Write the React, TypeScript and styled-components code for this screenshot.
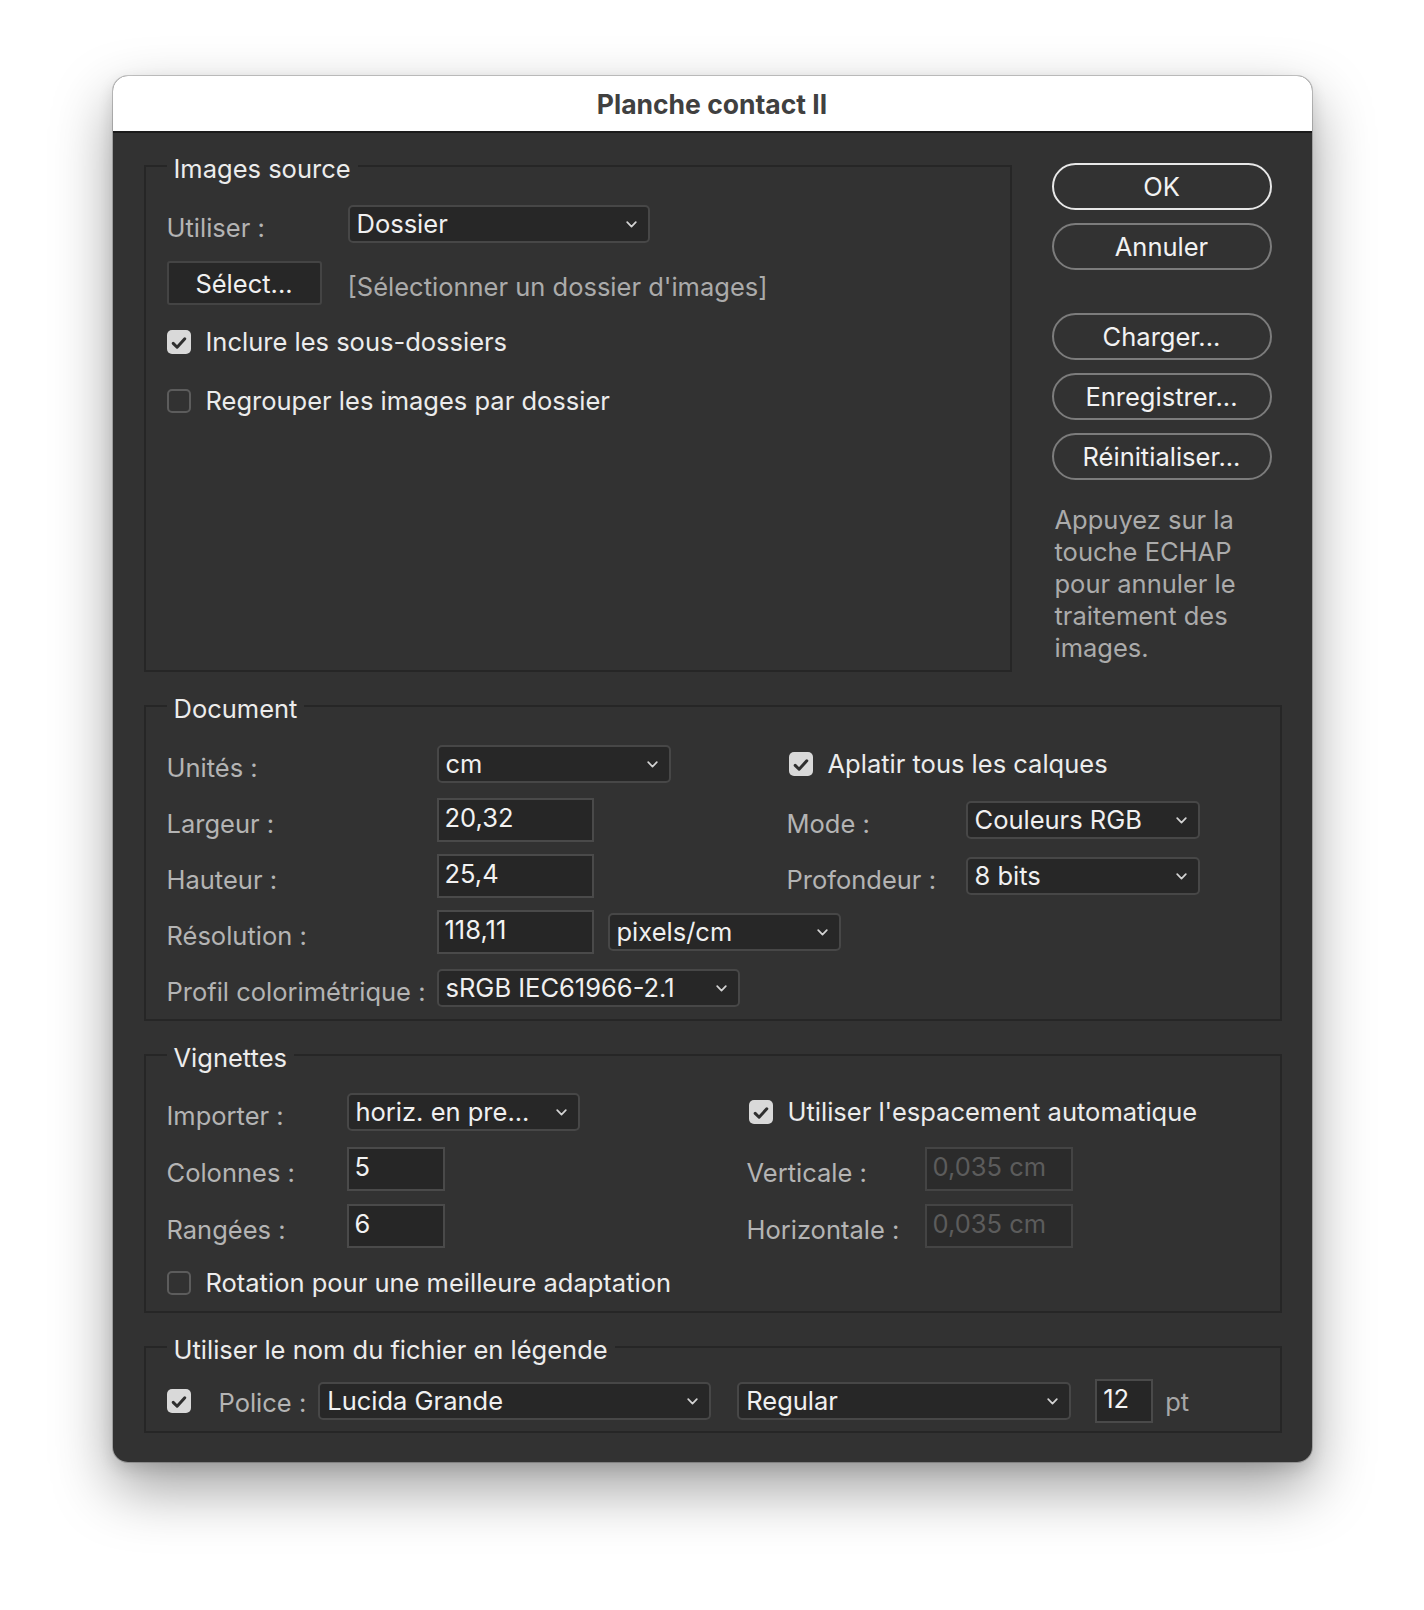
import React from "react";
import styled, { createGlobalStyle } from "styled-components";

const GlobalStyle = createGlobalStyle`
  html, body { margin: 0; padding: 0; background: #ffffff; }
  body {
    font-family: Inter, "Noto Sans", "Liberation Sans", sans-serif;
    -webkit-font-smoothing: antialiased;
  }
  * { box-sizing: border-box; }
`;

function Chevron() {
  return (
    <svg width="11" height="7" viewBox="0 0 11 7" fill="none">
      <path d="M1.2 1.2 L5.5 5.6 L9.8 1.2" stroke="#d4d4d4" strokeWidth="1.7" strokeLinecap="round" strokeLinejoin="round" />
    </svg>
  );
}

function Check({ checked, children }: { checked?: boolean; children?: React.ReactNode }) {
  return (
    <CheckRow>
      <Box $checked={checked}>
        {checked && (
          <svg width="24" height="24" viewBox="0 0 24 24" fill="none">
            <path d="M6.2 12.4 L10.1 16.2 L17.8 7.8" stroke="#2f2f2f" strokeWidth="3" strokeLinecap="round" strokeLinejoin="round" />
          </svg>
        )}
      </Box>
      {children && <CheckText>{children}</CheckText>}
    </CheckRow>
  );
}

function Select({ w, value }: { w: number; value: string }) {
  return (
    <SelectBox $w={w}>
      <span>{value}</span>
      <Chevron />
    </SelectBox>
  );
}

export default function App() {
  return (
    <>
      <GlobalStyle />
      <Page>
        <Dialog>
          <TitleBar>Planche contact II</TitleBar>
          <Body>
            <TopRow>
              <Group $w={868}>
                <Legend>Images source</Legend>
                <SourceContent>
                  <Row>
                    <Label $w={181}>Utiliser :</Label>
                    <Select w={302} value="Dossier" />
                  </Row>
                  <Row>
                    <PlainButton>Sélect...</PlainButton>
                    <Hint>[Sélectionner un dossier d'images]</Hint>
                  </Row>
                  <Row>
                    <Check checked>Inclure les sous-dossiers</Check>
                  </Row>
                  <Row>
                    <Check>Regrouper les images par dossier</Check>
                  </Row>
                </SourceContent>
              </Group>

              <Actions>
                <Pill $primary>OK</Pill>
                <Pill>Annuler</Pill>
                <Pill $spaced>Charger...</Pill>
                <Pill>Enregistrer...</Pill>
                <Pill>Réinitialiser...</Pill>
                <HelpText>
                  Appuyez sur la<br />
                  touche ECHAP<br />
                  pour annuler le<br />
                  traitement des<br />
                  images.
                </HelpText>
              </Actions>
            </TopRow>

            <Group>
              <Legend>Document</Legend>
              <FormGrid $cols="270px 350px 179px 1fr" $top={20} $bottom={9} $gap={12}>
                <Label>Unités :</Label>
                <Select w={234} value="cm" />
                <Span2>
                  <Check checked>Aplatir tous les calques</Check>
                </Span2>

                <Label>Largeur :</Label>
                <Field $w={157}>20,32</Field>
                <Label>Mode :</Label>
                <Select w={234} value="Couleurs RGB" />

                <Label>Hauteur :</Label>
                <Field $w={157}>25,4</Field>
                <Label>Profondeur :</Label>
                <Select w={234} value="8 bits" />

                <Label>Résolution :</Label>
                <Inline>
                  <Field $w={157}>118,11</Field>
                  <Select w={233} value="pixels/cm" />
                </Inline>
                <span />
                <span />

                <Label>Profil colorimétrique :</Label>
                <Select w={303} value="sRGB IEC61966-2.1" />
              </FormGrid>
            </Group>

            <Group>
              <Legend>Vignettes</Legend>
              <FormGrid $cols="180px 400px 178px 1fr" $top={19} $bottom={6} $gap={13}>
                <Label>Importer :</Label>
                <Select w={233} value="horiz. en pre..." />
                <Span2>
                  <Check checked>Utiliser l'espacement automatique</Check>
                </Span2>

                <Label>Colonnes :</Label>
                <Field $w={98}>5</Field>
                <Label>Verticale :</Label>
                <Field $w={148} $disabled>0,035 cm</Field>

                <Label>Rangées :</Label>
                <Field $w={98}>6</Field>
                <Label>Horizontale :</Label>
                <Field $w={148} $disabled>0,035 cm</Field>

                <SpanAll>
                  <Check>Rotation pour une meilleure adaptation</Check>
                </SpanAll>
              </FormGrid>
            </Group>

            <Group>
              <Legend>Utiliser le nom du fichier en légende</Legend>
              <CaptionRow>
                <Check checked />
                <PoliceLabel>Police :</PoliceLabel>
                <Select w={393} value="Lucida Grande" />
                <Select w={334} value="Regular" />
                <Field $w={58}>12</Field>
                <Unit>pt</Unit>
              </CaptionRow>
            </Group>
          </Body>
        </Dialog>
      </Page>
    </>
  );
}

const Page = styled.div`
  width: 1424px;
  height: 1610px;
  padding-top: 76px;
  display: flex;
  justify-content: center;
  align-items: flex-start;
  background: #ffffff;
`;

const Dialog = styled.div`
  width: 1199px;
  border-radius: 15px;
  overflow: hidden;
  background: #323232;
  box-shadow: 0 0 0 1px rgba(0, 0, 0, 0.2), 0 26px 60px rgba(0, 0, 0, 0.38),
    0 6px 16px rgba(0, 0, 0, 0.12);
`;

const TitleBar = styled.div`
  height: 57px;
  background: #ffffff;
  border-bottom: 2px solid #1b1b1b;
  display: flex;
  align-items: center;
  justify-content: center;
  font-size: 26.5px;
  font-weight: 700;
  color: #404040;
`;

const Body = styled.div`
  padding: 17px 30px 29px 31px;
  display: flex;
  flex-direction: column;
  gap: 18px;
  color: #ececec;
  font-size: 25.5px;
`;

const TopRow = styled.div`
  display: flex;
  align-items: flex-start;
`;

const Group = styled.fieldset<{ $w?: number }>`
  margin: 0;
  padding: 0 20px 0 21px;
  min-width: 0;
  width: ${(p) => (p.$w ? `${p.$w}px` : "100%")};
  border: 2px solid #262626;
`;

const Legend = styled.legend`
  height: 32px;
  padding: 3px 7px 0;
  font-size: 25.5px;
  line-height: 32px;
  color: #ececec;
`;

const SourceContent = styled.div`
  min-height: 488px;
  padding-top: 20px;
  display: flex;
  flex-direction: column;
  gap: 15px;
`;

const Row = styled.div`
  height: 44px;
  display: flex;
  align-items: center;
`;

const FormGrid = styled.div<{ $cols: string; $top: number; $bottom: number; $gap: number }>`
  display: grid;
  grid-template-columns: ${(p) => p.$cols};
  grid-auto-rows: 44px;
  row-gap: ${(p) => p.$gap}px;
  align-items: center;
  padding: ${(p) => p.$top}px 0 ${(p) => p.$bottom}px;
`;

const Label = styled.div<{ $w?: number }>`
  ${(p) => (p.$w ? `width: ${p.$w}px; flex: none;` : "")}
  padding-top: 8px;
  color: #b4b4b4;
  white-space: nowrap;
  line-height: 32px;
`;

const Span2 = styled.div`
  grid-column: 3 / span 2;
  padding-left: 2px;
`;

const SpanAll = styled.div`
  grid-column: 1 / -1;
`;

const Inline = styled.div`
  display: flex;
  align-items: center;
  gap: 14px;
`;

const SelectBox = styled.div<{ $w: number }>`
  width: ${(p) => p.$w}px;
  height: 38px;
  flex: none;
  display: flex;
  align-items: center;
  justify-content: space-between;
  padding: 0 11px 0 7px;
  background: #272727;
  border: 2px solid #474747;
  border-radius: 5px;
  color: #f0f0f0;
  white-space: nowrap;
  line-height: 32px;
`;

const Field = styled.div<{ $w: number; $disabled?: boolean }>`
  width: ${(p) => p.$w}px;
  height: 44px;
  flex: none;
  padding: 2px 6px 0;
  background: ${(p) => (p.$disabled ? "#2b2b2b" : "#262626")};
  border: 2px solid ${(p) => (p.$disabled ? "#444444" : "#4a4a4a")};
  color: ${(p) => (p.$disabled ? "#5c5c5c" : "#f2f2f2")};
  line-height: 32px;
  white-space: nowrap;
`;

const PlainButton = styled.div`
  width: 155px;
  height: 44px;
  flex: none;
  display: flex;
  align-items: center;
  justify-content: center;
  background: #272727;
  border: 2px solid #444444;
  border-radius: 3px;
  color: #f0f0f0;
`;

const Hint = styled.div`
  margin-left: 26px;
  padding-top: 6px;
  color: #ababab;
`;

const CheckRow = styled.div`
  display: flex;
  align-items: center;
  gap: 15px;
`;

const Box = styled.div<{ $checked?: boolean }>`
  width: 24px;
  height: 24px;
  flex: none;
  border-radius: 5px;
  background: ${(p) => (p.$checked ? "#d9d9d9" : "transparent")};
  border: ${(p) => (p.$checked ? "none" : "2px solid #5c5c5c")};
`;

const CheckText = styled.span`
  color: #ececec;
  white-space: nowrap;
  line-height: 32px;
`;

const Actions = styled.div`
  width: 220px;
  margin: 13px 0 0 40px;
  display: flex;
  flex-direction: column;
  gap: 13px;
`;

const Pill = styled.div<{ $primary?: boolean; $spaced?: boolean }>`
  height: 47px;
  display: flex;
  align-items: center;
  justify-content: center;
  border-radius: 24px;
  border: 2px solid ${(p) => (p.$primary ? "#e8e8e8" : "#7c7c7c")};
  color: #f2f2f2;
  margin-top: ${(p) => (p.$spaced ? "30px" : "0")};
`;

const HelpText = styled.div`
  margin-top: 11px;
  padding-left: 3px;
  color: #ababab;
  line-height: 32px;
`;

const CaptionRow = styled.div`
  height: 44px;
  margin: 16px 0 8px;
  display: flex;
  align-items: center;
  & > :nth-child(3) { margin-left: 12px; }
  & > :nth-child(4) { margin-left: 26px; }
  & > :nth-child(5) { margin-left: 24px; }
`;

const PoliceLabel = styled(Label)`
  margin-left: 28px;
  padding-top: 3px;
`;

const Unit = styled.div`
  margin-left: 12px;
  color: #a8a8a8;
`;
